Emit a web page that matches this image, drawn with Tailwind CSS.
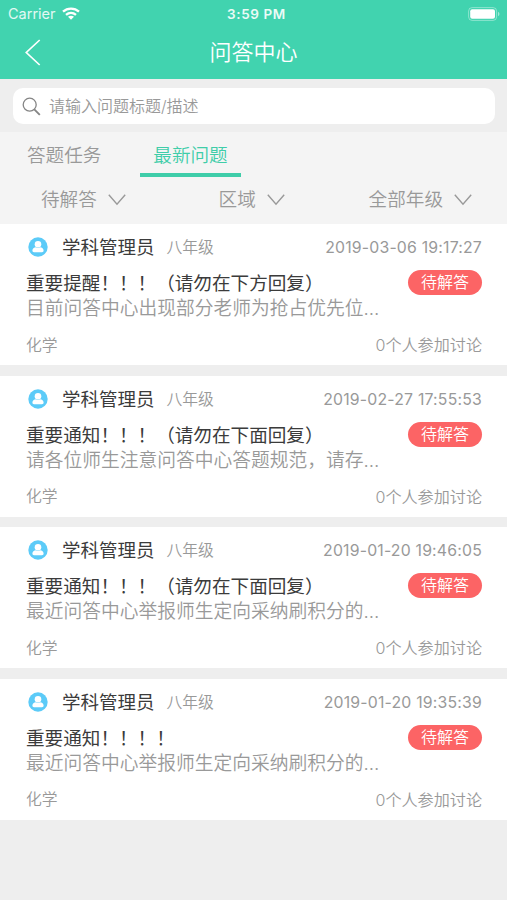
<!DOCTYPE html>
<html lang="zh-CN">
<head>
<meta charset="utf-8">
<title>问答中心</title>
<script src="https://cdn.jsdelivr.net/npm/@tailwindcss/browser@4"></script>
</head>
<body class="w-[507px] h-[900px] overflow-hidden bg-[#eeeeee] font-['Inter','Noto_Sans_CJK_SC',sans-serif] whitespace-nowrap">
<svg class="hidden">
  <symbol id="user" viewBox="0 0 20 20"><circle cx="10" cy="10" r="9.7" fill="#5ccbf8"/><circle cx="10" cy="7.2" r="3.3" fill="#fff"/><path d="M4.4 13.600c0-2 1.500-3.200 3.600-3.400 1.200.8 2.800.8 4 0 2.100.2 3.600 1.400 3.600 3.400 0 1.200-.6 1.600-1.600 1.600H6c-1 0-1.600-.4-1.600-1.600z" fill="#fff"/></symbol>
  <symbol id="down" viewBox="0 0 18 12"><path d="M.8 .8L9 10.2L17.2 .8" fill="none" stroke="#999" stroke-width="1.4"/></symbol>
</svg>
<header class="h-[79px] bg-[#41d3af] text-white">
  <div class="h-[27px] grid grid-cols-3 items-center pl-2 pr-[7px]">
    <div class="flex items-center gap-[7px] text-[14.5px] text-white/85"><span class="w-[47px]">Carrier</span>
      <svg class="w-[18px] h-[13px]" viewBox="0 0 18 13" fill="none" stroke="#fff" stroke-width="2.3"><path d="M1 4.6C5.5.5 12.500.5 17 4.600M4 7.900c3-2.600 7-2.600 10 0"/><path d="M9 12.700L6 9.800c1.700-1.400 4.300-1.400 6 0z" fill="#fff" stroke="none"/></svg>
    </div>
    <div class="text-center text-[13.5px] font-semibold tracking-[.6px] text-white/90 pl-[5px] pt-px">3:59 PM</div>
    <svg class="justify-self-end w-[32px] h-[14px]" viewBox="0 0 32 14"><rect x=".6" y=".6" width="28" height="12.800" rx="3.500" fill="none" stroke="#fff" stroke-opacity=".4"/><rect x="2.200" y="2.200" width="24.800" height="9.600" rx="2" fill="#fff"/><path d="M30 4.800c2 .8 2 3.600 0 4.400z" fill="#fff" fill-opacity=".5"/></svg>
  </div>
  <div class="h-[50px] grid grid-cols-[60px_1fr_60px] items-center">
    <svg class="w-4 h-[27px] ml-[25px]" viewBox="0 0 16 27" fill="none" stroke="#fff" stroke-width="1.7"><path d="M14.700 1L1.300 13.500L14.700 26"/></svg>
    <h1 class="text-center text-[22px] font-[350]">问答中心</h1>
  </div>
</header>
<div class="h-[53px] pl-[13px] pr-[12px] pt-[9px]">
  <div class="h-9 rounded-[10px] bg-white flex items-center pl-[9px] gap-2 text-[16px] font-[350] text-[#999]">
    <svg class="w-[19px] h-[19px]" viewBox="0 0 19 19" fill="none" stroke="#858585"><circle cx="7.700" cy="7.700" r="6.500" stroke-width="1.300"/><path d="M12.300 12.300l5.500 5.500" stroke-width="1.900"/></svg>
    <span>请输入问题标题/描述</span>
  </div>
</div>
<section class="h-[92px] bg-[#f4f4f4] text-[18.6px] font-[350] text-[#999]">
  <nav class="h-[45px] flex">
    <div class="w-[140px] pl-[27px] h-[45px] leading-[46px]">答题任务</div>
    <div class="w-[101px] h-[45px] leading-[46px] text-center text-[#3fcda9] border-b-[4px] border-[#3fcda9]">最新问题</div>
  </nav>
  <div class="h-[45px] pt-px flex items-center justify-between pl-[41px] pr-[35px]">
    <div class="flex items-center gap-[11px]">待解答<svg class="w-[18px] h-3"><use href="#down"/></svg></div>
    <div class="flex items-center gap-[11px] ml-[9px]">区域<svg class="w-[18px] h-3"><use href="#down"/></svg></div>
    <div class="flex items-center gap-[11px]">全部年级<svg class="w-[18px] h-3"><use href="#down"/></svg></div>
  </div>
</section>
<main class="flex flex-col gap-[10.5px] text-[#999] font-[350] text-[18.75px]">
  <article class="h-[141px] bg-white pl-[26px] pr-[25px]">
    <div class="h-[47px] pt-px flex items-center text-[15.8px]"><svg class="w-5 h-5 -mt-[2px] ml-[2px] mr-[14px]"><use href="#user"/></svg><span class="text-[18.5px] font-normal text-[#3b3b3b] mr-3">学科管理员</span><span>八年级</span><time class="ml-auto font-normal tracking-[.2px]">2019-03-06 19:17:27</time></div>
    <div class="h-[25px] flex items-center justify-between"><h2 class="font-normal text-[#3b3b3b] text-[18.6px] pt-px">重要提醒！！！（请勿在下方回复）</h2><span class="w-[74px] h-[25px] -mt-[2px] shrink-0 rounded-full bg-[#fc6465] text-white text-[16px] leading-[25px] text-center">待解答</span></div>
    <p class="h-[25px] leading-[25px]">目前问答中心出现部分老师为抢占优先位...</p>
    <div class="h-[44px] pt-[5px] flex items-center justify-between text-[15.8px]"><span>化学</span><span class="text-[16.1px]">0个人参加讨论</span></div>
  </article>
  <article class="h-[141px] bg-white pl-[26px] pr-[25px]">
    <div class="h-[47px] pt-px flex items-center text-[15.8px]"><svg class="w-5 h-5 -mt-[2px] ml-[2px] mr-[14px]"><use href="#user"/></svg><span class="text-[18.5px] font-normal text-[#3b3b3b] mr-3">学科管理员</span><span>八年级</span><time class="ml-auto font-normal tracking-[.2px]">2019-02-27 17:55:53</time></div>
    <div class="h-[25px] flex items-center justify-between"><h2 class="font-normal text-[#3b3b3b] text-[18.6px] pt-px">重要通知！！！（请勿在下面回复）</h2><span class="w-[74px] h-[25px] -mt-[2px] shrink-0 rounded-full bg-[#fc6465] text-white text-[16px] leading-[25px] text-center">待解答</span></div>
    <p class="h-[25px] leading-[25px]">请各位师生注意问答中心答题规范，请存...</p>
    <div class="h-[44px] pt-[5px] flex items-center justify-between text-[15.8px]"><span>化学</span><span class="text-[16.1px]">0个人参加讨论</span></div>
  </article>
  <article class="h-[141px] bg-white pl-[26px] pr-[25px]">
    <div class="h-[47px] pt-px flex items-center text-[15.8px]"><svg class="w-5 h-5 -mt-[2px] ml-[2px] mr-[14px]"><use href="#user"/></svg><span class="text-[18.5px] font-normal text-[#3b3b3b] mr-3">学科管理员</span><span>八年级</span><time class="ml-auto font-normal tracking-[.2px]">2019-01-20 19:46:05</time></div>
    <div class="h-[25px] flex items-center justify-between"><h2 class="font-normal text-[#3b3b3b] text-[18.6px] pt-px">重要通知！！！（请勿在下面回复）</h2><span class="w-[74px] h-[25px] -mt-[2px] shrink-0 rounded-full bg-[#fc6465] text-white text-[16px] leading-[25px] text-center">待解答</span></div>
    <p class="h-[25px] leading-[25px]">最近问答中心举报师生定向采纳刷积分的...</p>
    <div class="h-[44px] pt-[5px] flex items-center justify-between text-[15.8px]"><span>化学</span><span class="text-[16.1px]">0个人参加讨论</span></div>
  </article>
  <article class="h-[141px] bg-white pl-[26px] pr-[25px]">
    <div class="h-[47px] pt-px flex items-center text-[15.8px]"><svg class="w-5 h-5 -mt-[2px] ml-[2px] mr-[14px]"><use href="#user"/></svg><span class="text-[18.5px] font-normal text-[#3b3b3b] mr-3">学科管理员</span><span>八年级</span><time class="ml-auto font-normal tracking-[.2px]">2019-01-20 19:35:39</time></div>
    <div class="h-[25px] flex items-center justify-between"><h2 class="font-normal text-[#3b3b3b] text-[18.6px] pt-px">重要通知！！！！</h2><span class="w-[74px] h-[25px] -mt-[2px] shrink-0 rounded-full bg-[#fc6465] text-white text-[16px] leading-[25px] text-center">待解答</span></div>
    <p class="h-[25px] leading-[25px]">最近问答中心举报师生定向采纳刷积分的...</p>
    <div class="h-[44px] pt-[5px] flex items-center justify-between text-[15.8px]"><span>化学</span><span class="text-[16.1px]">0个人参加讨论</span></div>
  </article>
</main>
</body>
</html>
